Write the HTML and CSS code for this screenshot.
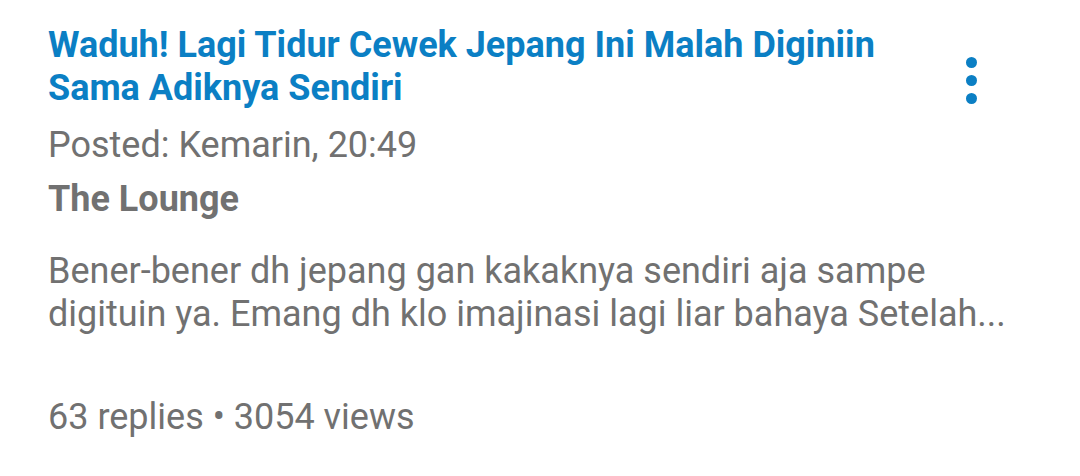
FILE: index.html
```html
<!DOCTYPE html>
<html>
<head>
<meta charset="utf-8">
<link rel="stylesheet" href="styles.css">
</head>
<body>
<div class="card">
  <div class="head">
    <div class="title">Waduh! Lagi Tidur Cewek Jepang Ini Malah Diginiin Sama Adiknya Sendiri</div>
    <div class="more"><span></span><span></span><span></span></div>
  </div>
  <div class="posted">Posted: Kemarin, 20:49</div>
  <div class="forum">The Lounge</div>
  <div class="excerpt">Bener-bener dh jepang gan kakaknya sendiri aja sampe digituin ya. Emang dh klo imajinasi lagi liar bahaya Setelah...</div>
  <div class="stats">63 replies • 3054 views</div>
</div>
</body>
</html>
```
FILE: styles.css
```css
html, body { margin: 0; padding: 0; background: #fff; }
body { font-family: Roboto, "Noto Sans", sans-serif; }
.card { width: 1080px; height: 476px; box-sizing: border-box; padding: 24px 0 0 48px; overflow: hidden; }
.head { display: flex; align-items: flex-start; }
.title { width: 890px; font-size: 36px; font-weight: 700; line-height: 43px; color: #0b7fc4; }
.more { display: flex; flex-direction: column; gap: 7px; margin: 33px 0 0 28px; }
.more span { width: 11px; height: 11px; border-radius: 50%; background: #0b7fc4; display: block; }
.posted { margin-top: 13px; font-size: 36px; line-height: 44px; color: #717171; }
.forum { margin-top: 10px; font-size: 36px; font-weight: 700; line-height: 44px; color: #717171; }
.excerpt { margin-top: 29px; width: 970px; font-size: 36px; line-height: 43px; color: #717171; }
.stats { margin-top: 59px; font-size: 36px; line-height: 44px; color: #717171; }
```
